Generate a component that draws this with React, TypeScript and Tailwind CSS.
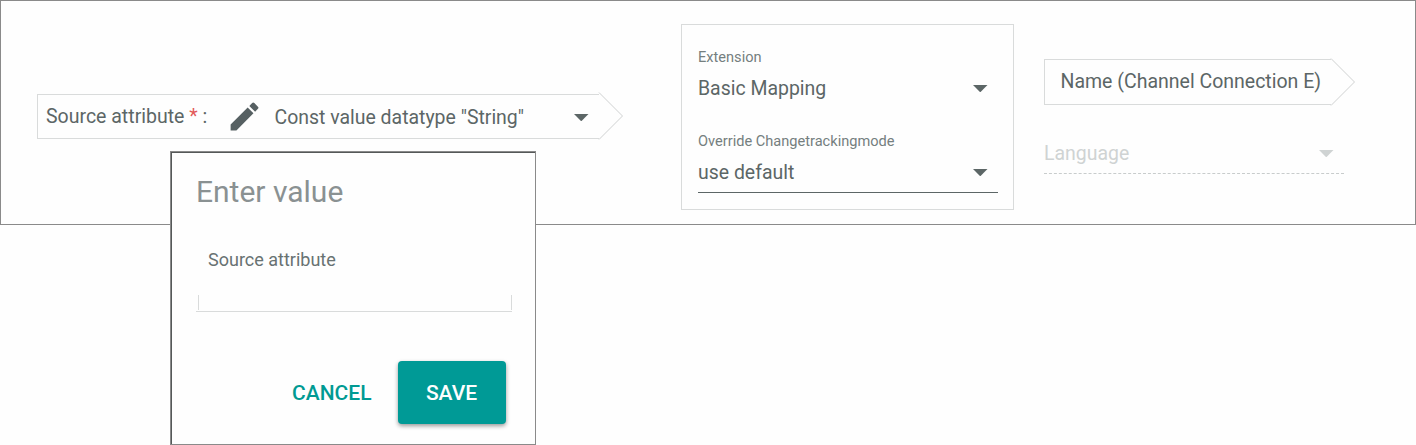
import type { ReactNode } from "react";

function Caret({ className = "" }: { className?: string }) {
  return (
    <svg className={`h-[7px] w-[15px] shrink-0 ${className}`} viewBox="0 0 15 7">
      <path d="M0 0h14.5L7.25 7.3z" fill="currentColor" />
    </svg>
  );
}

function Pencil() {
  return (
    <svg className="mt-px h-[37px] w-[37px] shrink-0" viewBox="0 0 24 24">
      <path
        fill="#566062"
        d="M3 17.25V21h3.75L17.81 9.94l-3.75-3.75L3 17.25zM20.71 7.04a.996.996 0 0 0 0-1.41l-2.34-2.34a.996.996 0 0 0-1.41 0l-1.83 1.83 3.75 3.75 1.83-1.83z"
      />
    </svg>
  );
}

function ArrowBox({ className, children }: { className: string; children: ReactNode }) {
  return (
    <div className="flex items-center">
      <div className={`flex items-center border border-r-0 border-[#d9dbdb] ${className}`}>{children}</div>
      <svg className="-ml-px h-12 w-[25px] shrink-0" viewBox="0 0 25 48">
        <path d="M1 .5L24.5 24L1 47.5" fill="none" stroke="#cfd1d1" strokeWidth="1" />
      </svg>
    </div>
  );
}

function SelectField({ label, value, className = "" }: { label: string; value: string; className?: string }) {
  return (
    <div className={className}>
      <div className="h-[18px] text-[14.6px] leading-[18px] text-[#757f7f]">{label}</div>
      <div className="mt-2.5 flex h-6 items-center justify-between pr-2.5">
        <span className="pt-0.5 text-[19.45px] leading-6">{value}</span>
        <Caret />
      </div>
    </div>
  );
}

function ValueDialog() {
  return (
    <div className="absolute left-[170px] top-[151px] flex h-[294px] w-[366px] flex-col border border-[#8a8a8a] bg-[#fefefe]">
      <div className="flex grow flex-col border-l border-t border-[#555858] pl-6 pr-[23px] pt-[21px]">
        <h2 className="h-9 text-[30px] leading-9 text-[#8a9192]">Enter value</h2>
        <div className="mt-[38px] h-6 pl-3 text-[18px] leading-6 text-[#687272]">Source attribute</div>
        <div className="mt-[23px] h-[17px] border-b border-[#d9dbdb] pl-0.5">
          <div className="h-[15px] border-x border-[#d9dbdb]" />
        </div>
        <div className="mt-[49px] flex items-center justify-end pr-1.5 text-[21px] font-medium">
          <button className="mr-[26.5px] pt-0.5 text-[#009a93]">CANCEL</button>
          <button className="h-[63px] w-[108px] rounded bg-[#009a96] pt-0.5 pr-px text-[#fefefe] shadow-[0_2px_4px_rgba(0,0,0,0.4)]">
            SAVE
          </button>
        </div>
      </div>
    </div>
  );
}

export default function App() {
  return (
    <div className="relative h-[445px] w-[1416px] overflow-hidden bg-[#fefefe] font-['Roboto',sans-serif] text-[#5c6666]">
      <div className="flex h-[225px] items-start border border-[#8a8a8a]">
        <div className="pl-9 pt-[91px]">
          <ArrowBox className="h-[45px] w-[562px] pl-2 pr-2.5">
            <span className="w-[179.5px] whitespace-pre pt-px text-[19.5px]">
              Source attribute <span className="text-[#e2595a]">*</span> :
            </span>
            <Pencil />
            <span className="ml-3 grow pt-[3px] text-[19.45px]">Const value datatype "String"</span>
            <Caret className="mt-0.5" />
          </ArrowBox>
        </div>
        <div className="ml-[58px] mt-[23px] h-[186px] w-[333px] border border-[#d9dbdb] pl-4 pr-[15px] pt-[23px]">
          <SelectField label="Extension" value="Basic Mapping" />
          <SelectField
            label="Override Changetrackingmode"
            value="use default"
            className="mt-8 h-[61px] border-b border-[#5c6666]"
          />
        </div>
        <div className="ml-[30px] pt-[57px]">
          <ArrowBox className="h-[46px] w-[287px] pl-[15.5px]">
            <span className="whitespace-nowrap text-[19.5px]">Name (Channel Connection E)</span>
          </ArrowBox>
          <div className="mt-9 flex h-[31px] w-[300px] pr-2.5 text-[#cfd3d3]">
            <span className="grow text-[19.45px] leading-6">Language</span>
            <Caret className="mt-2" />
          </div>
          <svg className="h-px w-[300px]" viewBox="0 0 300 1">
            <path d="M0 .5H300" stroke="#c8cccc" strokeDasharray="3 1.95" />
          </svg>
        </div>
      </div>
      <ValueDialog />
    </div>
  );
}
